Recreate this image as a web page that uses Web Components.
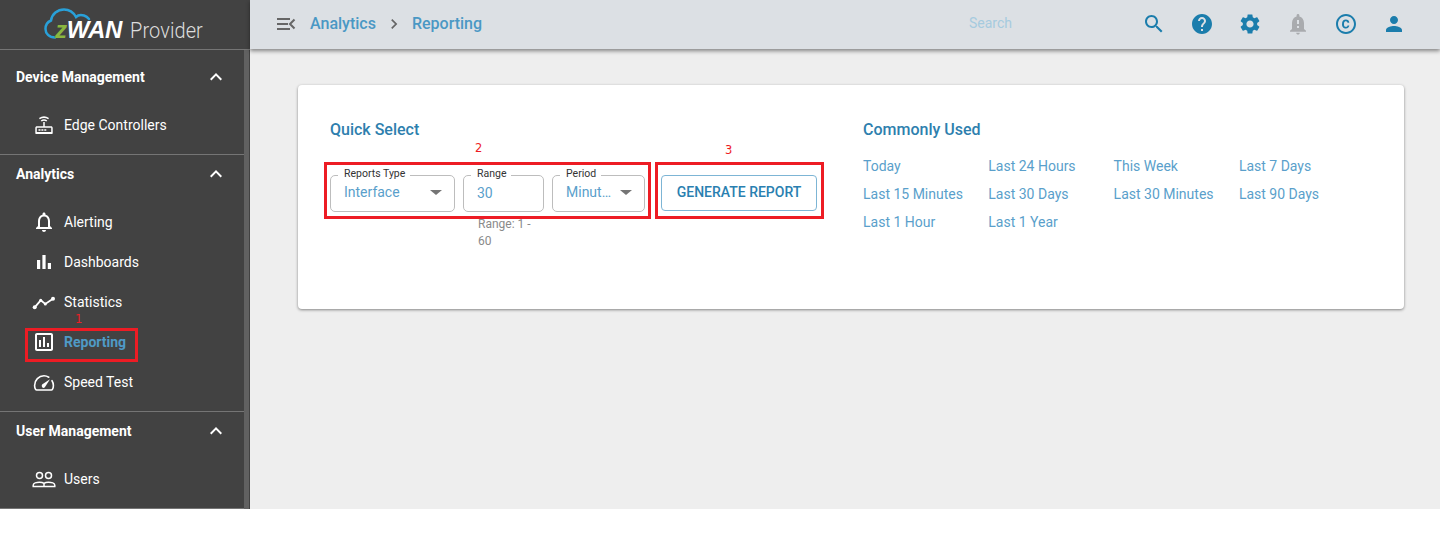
<!DOCTYPE html>
<html lang="en">
<head>
<meta charset="utf-8">
<title>Reporting</title>
<style>
  html, body { margin: 0; background: #fff; }
  body { font-family: Roboto, "Liberation Sans", sans-serif; font-size: 14px; }
</style>
</head>
<body>
<app-shell>
  <side-nav slot="side">
    <nav-section heading="Device Management" first>
      <nav-item icon="router">Edge Controllers</nav-item>
    </nav-section>
    <nav-section heading="Analytics">
      <nav-item icon="bell">Alerting</nav-item>
      <nav-item icon="bars">Dashboards</nav-item>
      <nav-item icon="timeline">Statistics</nav-item>
      <nav-item icon="assessment" active>Reporting</nav-item>
      <nav-item icon="speed">Speed Test</nav-item>
    </nav-section>
    <nav-section heading="User Management">
      <nav-item icon="users">Users</nav-item>
    </nav-section>
  </side-nav>
  <top-bar slot="top"></top-bar>
  <report-card></report-card>
</app-shell>

<note-box num="1" style="left:25px;top:328px;width:113px;height:34px" num-x="47" num-y="-20"></note-box>
<note-box num="2" style="left:324px;top:162px;width:327px;height:57px" num-x="148" num-y="-25"></note-box>
<note-box num="3" style="left:655px;top:162px;width:169px;height:57px" num-x="67" num-y="-23"></note-box>

<script>
"use strict"

const ICONS = {
  router: `<g fill="none" stroke="currentColor" stroke-width="1.5"><path d="M9.200 8c1.700-1.200 3.900-1.200 5.600 0M7.400 5.600c2.800-1.800 6.400-1.800 9.200 0"/><path d="M12 9v5"/></g><path fill="currentColor" d="M5 13.200h14c1 0 1.700.7 1.700 1.700v5.400c0 .4-.3.7-.7.7H4c-.4 0-.7-.3-.7-.7v-5.400c0-1 .7-1.700 1.700-1.700zm0 1.500c-.1 0-.2.1-.2.2v4.100h14.400v-4.100c0-.1-.1-.2-.2-.2H5z"/><path fill="currentColor" d="M6.500 16.200h2v1.600h-2zM9.400 16.200h2v1.600h-2zM12.300 16.200h2v1.600h-2z"/>`,
  bell: `<path fill="currentColor" d="M12 22c1.100 0 2-.9 2-2h-4c0 1.100.9 2 2 2zm6-6v-5c0-3.070-1.630-5.640-4.500-6.320V4c0-.83-.67-1.500-1.500-1.500s-1.500.67-1.500 1.500v.68C7.640 5.360 6 7.920 6 11v5l-2 2v1h16v-1l-2-2zm-2 1H8v-6c0-2.480 1.510-4.500 4-4.500s4 2.020 4 4.500v6z"/>`,
  bars: `<path fill="currentColor" d="M5 10h3.200v9H5zM10.400 5h3.200v14h-3.200zM15.800 13H19v6h-3.200z"/>`,
  timeline: `<path fill="none" stroke="currentColor" stroke-width="1.800" d="M2.700 17.300l6-7 4.600 3.700L21 8.700"/><g fill="currentColor"><circle cx="2.700" cy="17.300" r="2"/><circle cx="8.700" cy="10.300" r="1.500"/><circle cx="13.300" cy="14" r="1.500"/><circle cx="21" cy="8.700" r="2"/></g>`,
  assessment: `<path fill="currentColor" d="M19 3H5c-1.100 0-2 .9-2 2v14c0 1.100.9 2 2 2h14c1.100 0 2-.9 2-2V5c0-1.100-.9-2-2-2zm0 16H5V5h14v14z"/><path fill="currentColor" d="M7 10h2v7H7zM11 7h2v10h-2zM15 13h2v4h-2z"/>`,
  speed: `<path fill="none" stroke="currentColor" stroke-width="1.600" stroke-linecap="round" d="M4.800 20h14.600c.5 0 .8-.2 1-.6.7-1.300 1-2.600 1-4 0-1.700-.5-3.300-1.400-4.700M16.800 7.200C15.300 6.300 13.700 5.800 12 5.800c-5.200 0-9.400 4.200-9.400 9.600 0 1.400.3 2.700 1 4 .2.400.6.600 1.200.6"/><path fill="currentColor" d="M10.400 17.400c-.9-.9-.9-2.200 0-3.100l7.600-5-5 7.600c-.8 1.100-1.700 1.300-2.600.5z"/>`,
  users: `<g fill="none" stroke="currentColor" stroke-width="1.500"><circle cx="7.500" cy="8.500" r="3"/><circle cx="16.500" cy="8.500" r="3"/><path d="M1.200 19.500v-1.200c0-2 3.400-3.100 6.300-3.100 1.700 0 3.500.4 4.500 1.100 1-.7 2.800-1.100 4.500-1.100 2.900 0 6.300 1.100 6.300 3.100v1.200H1.200zM12 16.300v3.200"/></g>`,
  search: `<path fill="currentColor" d="M15.500 14h-.79l-.28-.27C15.410 12.590 16 11.110 16 9.500 16 5.910 13.090 3 9.500 3S3 5.910 3 9.500 5.910 16 9.500 16c1.610 0 3.090-.59 4.230-1.570l.27.28v.79l5 4.990L20.490 19l-4.990-5zm-6 0C7.010 14 5 11.990 5 9.500S7.010 5 9.500 5 14 7.010 14 9.500 11.990 14 9.500 14z"/>`,
  help: `<path fill="currentColor" d="M12 2C6.480 2 2 6.480 2 12s4.480 10 10 10 10-4.480 10-10S17.520 2 12 2zm1 17h-2v-2h2v2zm2.070-7.750l-.9.920C13.450 12.900 13 13.500 13 15h-2v-.5c0-1.100.45-2.100 1.170-2.830l1.240-1.260c.37-.36.59-.86.59-1.410 0-1.100-.9-2-2-2s-2 .9-2 2H8c0-2.210 1.790-4 4-4s4 1.790 4 4c0 .88-.36 1.680-.93 2.250z"/>`,
  settings: `<path fill="currentColor" d="M19.140 12.940c.04-.3.06-.61.06-.94 0-.32-.02-.64-.07-.94l2.030-1.580c.18-.14.23-.41.12-.61l-1.920-3.320c-.12-.22-.37-.29-.59-.22l-2.390.96c-.5-.38-1.030-.7-1.620-.94l-.36-2.540c-.04-.24-.24-.41-.48-.41h-3.840c-.24 0-.43.17-.47.41l-.36 2.540c-.59.24-1.130.57-1.620.94l-2.390-.96c-.22-.08-.47 0-.59.22L2.740 8.870c-.12.21-.08.47.12.61l2.030 1.580c-.05.3-.09.63-.09.94s.02.64.07.94l-2.030 1.580c-.18.14-.23.41-.12.61l1.920 3.320c.12.22.37.29.59.22l2.390-.96c.5.38 1.030.7 1.620.94l.36 2.540c.05.24.24.41.48.41h3.840c.24 0 .44-.17.47-.41l.36-2.540c.59-.24 1.130-.56 1.620-.94l2.390.96c.22.08.47 0 .59-.22l1.920-3.320c.12-.22.07-.47-.12-.61l-2.010-1.580zM12 15.600c-1.980 0-3.600-1.620-3.600-3.600s1.620-3.600 3.600-3.600 3.600 1.620 3.600 3.600-1.620 3.600-3.600 3.600z"/>`,
  alert: `<path fill="currentColor" d="M12 22.500c1 0 1.800-.8 1.800-1.800h-3.600c0 1 .8 1.800 1.800 1.800zm6-5.500v-6c0-3.100-1.900-5.700-4.600-6.400V3.500c0-.8-.6-1.400-1.400-1.400s-1.400.6-1.400 1.400v1.100C7.900 5.300 6 7.900 6 11v6l-2 1.800v.9h16v-.9L18 17zm-5-1h-2v-2h2v2zm0-4h-2V8h2v4z"/>`,
  copyright: `<path fill="currentColor" d="M11.880 9.140c1.280.06 1.610 1.150 1.630 1.660h1.790c-.08-1.980-1.490-3.190-3.450-3.190C9.640 7.610 8 9 8 12.140c0 1.940.93 4.240 3.840 4.240 2.220 0 3.410-1.650 3.440-2.950h-1.790c-.03.59-.45 1.380-1.630 1.440-1.310-.04-1.860-1.060-1.860-2.730 0-2.890 1.280-2.980 1.880-3zM12 2C6.480 2 2 6.480 2 12s4.480 10 10 10 10-4.480 10-10S17.520 2 12 2zm0 18c-4.410 0-8-3.590-8-8s3.590-8 8-8 8 3.590 8 8-3.590 8-8 8z"/>`,
  person: `<path fill="currentColor" d="M12 12c2.210 0 4-1.790 4-4s-1.790-4-4-4-4 1.790-4 4 1.790 4 4 4zm0 2c-2.670 0-8 1.340-8 4v2h16v-2c0-2.660-5.330-4-8-4z"/>`,
  less: `<path fill="currentColor" d="M12 8l-6 6 1.410 1.410L12 10.830l4.590 4.580L18 14z"/>`,
  next: `<path fill="currentColor" d="M10 6L8.590 7.410 13.170 12l-4.580 4.590L10 18l6-6z"/>`,
  menuopen: `<path fill="currentColor" d="M3 6h13v2H3zM3 11h11v2H3zM3 16h13v2H3z"/><path fill="none" stroke="currentColor" stroke-width="2" d="M20.500 7.500L16 12l4.500 4.500"/>`,
};

class UiIcon extends HTMLElement {
  connectedCallback() {
    const root = this.shadowRoot || this.attachShadow({ mode: "open" });
    root.innerHTML = `
      <style>
        :host { display: block; width: var(--icon-size, 24px); height: var(--icon-size, 24px); flex: none; }
        svg { display: block; width: 100%; height: 100%; }
      </style>
      <svg viewBox="0 0 24 24">${ICONS[this.getAttribute("name")] || ""}</svg>`;
  }
}

class AppShell extends HTMLElement {
  constructor() {
    super();
    this.attachShadow({ mode: "open" }).innerHTML = `
      <style>
        :host { display: grid; grid-template-columns: 250px 1fr; grid-template-rows: 49px 1fr; height: 509px; background: #eee; overflow: hidden; }
        .side { grid-row: 1 / 3; display: block; }
        main { padding: 36px 36px 0 48px; min-width: 0; }
      </style>
      <slot class="side" name="side"></slot>
      <slot name="top"></slot>
      <main><slot></slot></main>`;
  }
}

class SideNav extends HTMLElement {
  constructor() {
    super();
    this.attachShadow({ mode: "open" }).innerHTML = `
      <style>
        :host { display: flex; flex-direction: column; height: 509px; background: #424242; color: #fff; }
        .logo { flex: none; height: 49px; border-bottom: 1px solid #757575; display: flex; align-items: center; }
        .mark { position: relative; margin-left: 44px; width: 82px; height: 49px; flex: none; }
        .mark svg { position: absolute; left: 0; top: 8px; width: 50px; height: 34px; }
        .zwan { position: absolute; left: 11px; top: 15px; font: italic bold 24px/30px "Liberation Sans", sans-serif; letter-spacing: -.2px; color: #fff; }
        .zwan b { color: #8ab63f; font-weight: bold; }
        .provider { margin-left: 4px; font: 300 21.500px/30px Roboto, sans-serif; color: #ddd; letter-spacing: .1px; position: relative; top: 6px; transform-origin: left; transform: scaleX(.93); }
        .body { flex: 1; display: grid; grid-template-columns: 244px 6px; min-height: 0; }
        .track { background: #616161; margin-right: 1px; }
      </style>
      <div class="logo">
        <div class="mark">
          <svg viewBox="44 8 50 34" fill="none" stroke="#29a0d8" stroke-width="2.500" stroke-linecap="round">
            <path d="M55 37.500C49 37.500 45.500 33.500 45.500 29 45.500 25 47.500 22 51 20.500 52 14 57.500 9.500 64 9.500 69 9.500 73.500 12.500 76 17 78 15 81 14.500 84 15.500 86 16.200 87.500 17.200 89 19"/>
          </svg>
          <div class="zwan"><b>z</b>WAN</div>
        </div>
        <div class="provider">Provider</div>
      </div>
      <div class="body">
        <div><slot></slot></div>
        <div class="track"></div>
      </div>`;
  }
}

class NavSection extends HTMLElement {
  constructor() {
    super();
    this.attachShadow({ mode: "open" });
  }

  connectedCallback() {
    this.shadowRoot.innerHTML = `
      <style>
        :host { display: block; border-bottom: 1px solid #757575; padding: 0 0 9px; }
        :host([first]) { padding-top: 8px; }
        header { height: 38px; display: flex; align-items: center; justify-content: space-between; padding: 0 16px; font-weight: 700; font-size: 14px; color: #fff; }
        .items { margin-top: 9px; }
      </style>
      <header><span>${this.getAttribute("heading")}</span><ui-icon name="less"></ui-icon></header>
      <div class="items"><slot></slot></div>`;
  }
}

class NavItem extends HTMLElement {
  constructor() {
    super();
    this.attachShadow({ mode: "open" });
  }

  connectedCallback() {
    this.shadowRoot.innerHTML = `
      <style>
        :host { display: flex; align-items: center; gap: 8px; height: 40px; padding-left: 32px; color: #fff; font-size: 14px; }
        :host([active]) .label { color: #4f9ac6; font-weight: 700; }
      </style>
      <ui-icon name="${this.getAttribute("icon")}"></ui-icon>
      <span class="label"><slot></slot></span>`;
  }
}

class TopBar extends HTMLElement {
  constructor() {
    super();
    const actions = [
      ["search", "#1b7dac"], ["help", "#1b7dac"], ["settings", "#1b7dac"],
      ["alert", "#a9abae"], ["copyright", "#1b7dac"], ["person", "#1b7dac"],
    ];
    this.attachShadow({ mode: "open" }).innerHTML = `
      <style>
        :host { display: flex; align-items: center; box-sizing: border-box; height: 49px; padding-bottom: 1px; background: #dce0e4; box-shadow: 0 2px 4px rgba(0,0,0,.45); position: relative; z-index: 1; font-size: 16px; color: #4a98c4; }
        .menu { margin-left: 24px; color: #666; }
        .crumb { font-weight: 500; position: relative; top: -1px; }
        .first { margin-left: 12px; }
        .sep { margin: 0 8px; color: #666; --icon-size: 20px; }
        .search { margin-left: auto; font-size: 14px; color: #a6cbdf; width: 173px; position: relative; top: -1px; }
        .actions { display: flex; gap: 24px; margin-right: 34px; }
      </style>
      <ui-icon class="menu" name="menuopen"></ui-icon>
      <span class="crumb first">Analytics</span>
      <ui-icon class="sep" name="next"></ui-icon>
      <span class="crumb">Reporting</span>
      <span class="search">Search</span>
      <div class="actions">
        ${actions.map(([n, c]) => `<ui-icon name="${n}" style="color:${c}"></ui-icon>`).join("")}
      </div>`;
  }
}

class OutlineField extends HTMLElement {
  constructor() {
    super();
    this.attachShadow({ mode: "open" });
  }

  connectedCallback() {
    const select = this.hasAttribute("select");
    const hint = this.getAttribute("hint");
    this.shadowRoot.innerHTML = `
      <style>
        :host { display: block; flex: none; width: var(--w); }
        .box { box-sizing: border-box; height: 37px; padding: 0 13px; border: 1px solid #bdbdbd; border-radius: 5px; display: flex; align-items: center; position: relative; }
        .label { position: absolute; left: 7px; top: -8px; font-size: 10.500px; line-height: 12px; color: #333; padding: 0 5px 0 6px; background: #fff; white-space: nowrap; }
        .value { flex: 1; min-width: 0; font-size: 14px; color: #5a9fcb; white-space: nowrap; position: relative; top: ${select ? "-2px" : "-1px"}; }
        .caret { flex: none; width: 0; height: 0; border: 6px solid transparent; border-top: 5px solid #757575; border-bottom: 0; margin: 0 -1px 0 5px; position: relative; top: -1px; }
        .hint { font-size: 12px; line-height: 17px; color: #8a8a8a; padding: 4px 5px 0 15px; }
      </style>
      <div class="box">
        <span class="label">${this.getAttribute("label")}</span>
        <div class="value">${this.getAttribute("value")}</div>
        ${select ? `<div class="caret"></div>` : ""}
      </div>
      ${hint ? `<div class="hint">${hint}</div>` : ""}`;
  }
}

class ReportCard extends HTMLElement {
  constructor() {
    super();
    const links = ["Today", "Last 24 Hours", "This Week", "Last 7 Days", "Last 15 Minutes", "Last 30 Days",
      "Last 30 Minutes", "Last 90 Days", "Last 1 Hour", "Last 1 Year"];
    this.attachShadow({ mode: "open" }).innerHTML = `
      <style>
        :host { display: grid; grid-template-columns: 533px 1fr; box-sizing: border-box; height: 224px; padding: 34px 32px 0; background: #fff; border-radius: 4px; box-shadow: 0 1px 3px rgba(0,0,0,.45); color: #2e7fae; }
        h2 { margin: 0; font-size: 16px; font-weight: 500; line-height: 22px; color: #2e7fae; }
        .row { display: flex; gap: 8px; margin-top: 34px; align-items: flex-start; }
        button { box-sizing: border-box; margin-left: 8px; width: 156px; height: 36px; background: #fff; border: 1px solid #7db5d5; border-radius: 4px; font: 500 14px Roboto, sans-serif; color: #2a7fb0; padding: 0 0 2px; }
        .links { display: grid; grid-template-columns: repeat(4, 125.300px); grid-auto-rows: 28px; margin-top: 11px; align-items: center; font-size: 14px; color: #5a9fcb; }
      </style>
      <section>
        <h2>Quick Select</h2>
        <div class="row">
          <outline-field style="--w:125px" label="Reports Type" value="Interface" select></outline-field>
          <outline-field style="--w:81px" label="Range" value="30" hint="Range: 1 - 60"></outline-field>
          <outline-field style="--w:93px" label="Period" value="Minut…" select></outline-field>
          <button>GENERATE REPORT</button>
        </div>
      </section>
      <section>
        <h2>Commonly Used</h2>
        <div class="links">${links.map(l => `<span>${l}</span>`).join("")}</div>
      </section>`;
  }
}

class NoteBox extends HTMLElement {
  constructor() {
    super();
    this.attachShadow({ mode: "open" });
  }

  connectedCallback() {
    const x = this.getAttribute("num-x"), y = this.getAttribute("num-y");
    this.shadowRoot.innerHTML = `
      <style>
        :host { position: absolute; box-sizing: border-box; border: 3px solid #ed1c24; display: block; }
        span { position: absolute; left: ${x}px; top: ${y}px; font: 11.500px/16px "DejaVu Sans", sans-serif; color: #ed1c24; }
      </style>
      <span>${this.getAttribute("num")}</span>`;
  }
}

customElements.define("ui-icon", UiIcon);
customElements.define("app-shell", AppShell);
customElements.define("side-nav", SideNav);
customElements.define("nav-section", NavSection);
customElements.define("nav-item", NavItem);
customElements.define("top-bar", TopBar);
customElements.define("outline-field", OutlineField);
customElements.define("report-card", ReportCard);
customElements.define("note-box", NoteBox);
</script>
</body>
</html>
